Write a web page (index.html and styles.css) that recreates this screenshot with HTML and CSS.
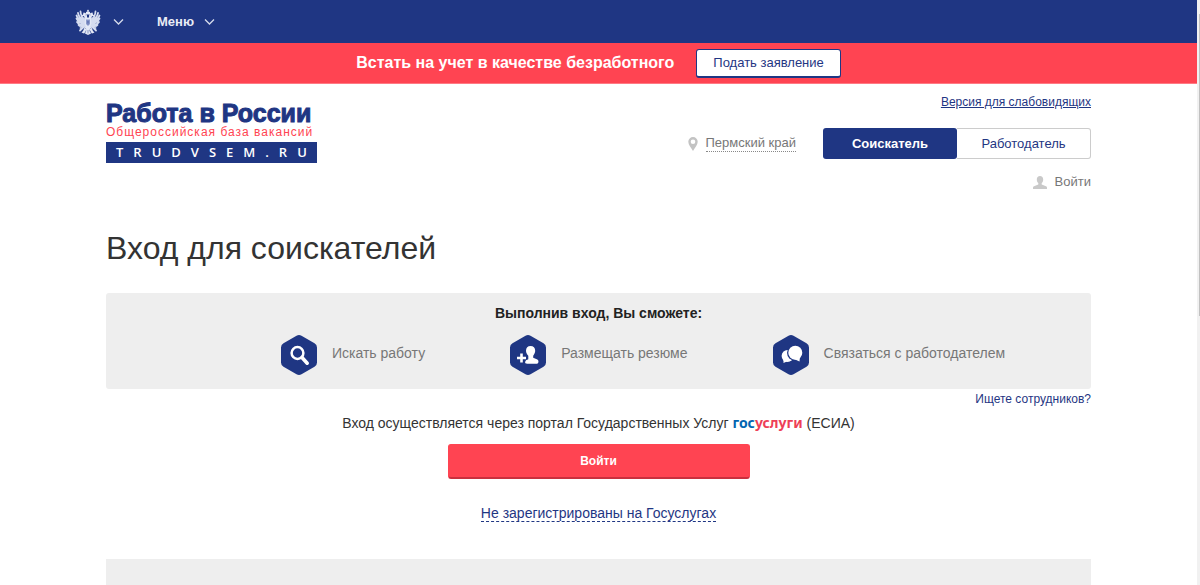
FILE: index.html
```html
<!DOCTYPE html>
<html lang="ru">
<head>
<meta charset="utf-8">
<meta name="viewport" content="width=device-width, initial-scale=1">
<title>Работа в России</title>
<link rel="stylesheet" href="styles.css">
</head>
<body>
<div class="page">
  <nav class="topbar">
    <button class="top-item" type="button" aria-label="Государственные сайты">
      <svg class="eagle" viewBox="0 0 52 52" aria-hidden="true">
        <g fill="#e3e8f6">
          <path d="M26 1l2 2-1 2 3 1v5h-8V6l3-1-1-2z"/>
          <path d="M17 7l4 1 3 4v6h-5l-1-4-4 1-1-2 3-2zM35 7l-4 1-3 4v6h5l1-4 4 1 1-2-3-2z"/>
          <path d="M20 17h12l3 9-3 12-6 5-6-5-3-12z"/>
          <path d="M19 37l4 4-1 5-4 3-5-2 3-3zM33 37l-4 4 1 5 4 3 5-2-3-3zM23 40h6l3 9-6 3-6-3z"/>
        </g>
        <g stroke="#d5dcf0" stroke-width="3.600" stroke-linecap="round" fill="none">
          <path d="M19 20Q12 17 11 5M18 22Q8 19 6 8M18 25Q6 22 3 13M18 28Q7 27 3 19M18 31Q8 32 4 26M19 33Q10 36 7 32M20 35Q14 39 11 38"/>
          <path d="M33 20Q40 17 41 5M34 22Q44 19 46 8M34 25Q46 22 49 13M34 28Q45 27 49 19M34 31Q44 32 48 26M33 33Q42 36 45 32M32 35Q38 39 41 38"/>
          <path d="M15 38L10 43M37 38L42 43"/>
        </g>
        <path d="M22 21h8v9l-4 4-4-4z" fill="#8c9bcb"/>
        <path d="M26 23v8M24 26h4M22 43l-2 5M30 43l2 5M26 42v7M21 12h2M29 12h2" stroke="#4a5fa6" stroke-width="1.2"/>
      </svg>
      <svg class="chevron" viewBox="0 0 10 6" aria-hidden="true"><path d="M.5.5L5 5 9.500.5"/></svg>
    </button>
    <button class="top-item menu" type="button">Меню
      <svg class="chevron" viewBox="0 0 10 6" aria-hidden="true"><path d="M.5.5L5 5 9.500.5"/></svg>
    </button>
  </nav>

  <div class="notice">
    <strong>Встать на учет в качестве безработного</strong>
    <button class="apply" type="button">Подать заявление</button>
  </div>

  <div class="container">
    <header class="header">
      <a class="logo" href="#">
        <span class="logo-name">Работа в России</span>
        <span class="logo-sub">Общероссийская база вакансий</span>
        <span class="logo-site">TRUDVSEM.RU</span>
      </a>
      <div class="tools">
        <a class="vision" href="#">Версия для слабовидящих</a>
        <div class="tools-row">
          <a class="region" href="#">
            <svg class="pin" viewBox="0 0 10 14" aria-hidden="true"><path fill-rule="evenodd" d="M5 0a4.700 4.700 0 0 1 4.700 4.700C9.700 7.500 7 10.500 5 14 3 10.500.3 7.500.3 4.700A4.700 4.700 0 0 1 5 0zm0 2.500a2.300 2.300 0 1 0 0 4.600 2.300 2.300 0 0 0 0-4.600z"/></svg>
            <span>Пермский край</span>
          </a>
          <div class="switch">
            <button class="role active" type="button">Соискатель</button>
            <button class="role" type="button">Работодатель</button>
          </div>
        </div>
        <a class="signin" href="#">
          <svg class="person" viewBox="0 0 14 13" aria-hidden="true"><path d="M7 0c2 0 3.200 1.300 3.200 3.400 0 1.700-.7 2.800-1.500 3.700v1.400l4.300 1.700c.7.300 1 .8 1 1.600V13H0v-1.200c0-.8.3-1.300 1-1.600l4.300-1.700V7.100C4.500 6.200 3.800 5.100 3.800 3.400 3.800 1.300 5 0 7 0z"/></svg>
          Войти
        </a>
      </div>
    </header>

    <main class="main">
      <h1>Вход для соискателей</h1>
      <section class="benefits">
        <h2>Выполнив вход, Вы сможете:</h2>
        <ul>
          <li>
            <svg class="hex" viewBox="0 0 38 42" aria-hidden="true">
              <path class="hex-bg" d="M16.500 1.700q2.500-1.400 5 0l13 7.500q2.500 1.400 2.500 4.300v15q0 2.900-2.500 4.300l-13 7.500q-2.500 1.400-5 0l-13-7.500Q1 31.400 1 28.500v-15q0-2.900 2.500-4.300z"/>
              <circle cx="17.500" cy="19" r="5.900" fill="none" stroke="#fff" stroke-width="2.500"/>
              <path d="M22 23.500l5.200 5.700" stroke="#fff" stroke-width="3.600" stroke-linecap="round"/>
            </svg>
            <span>Искать работу</span>
          </li>
          <li>
            <svg class="hex" viewBox="0 0 38 42" aria-hidden="true">
              <path class="hex-bg" d="M16.500 1.700q2.500-1.400 5 0l13 7.500q2.500 1.400 2.500 4.300v15q0 2.900-2.500 4.300l-13 7.500q-2.500 1.400-5 0l-13-7.500Q1 31.400 1 28.500v-15q0-2.900 2.500-4.300z"/>
              <path d="M8 24h9M12.500 19.500v9" stroke="#fff" stroke-width="2.600"/>
              <path fill="#fff" d="M21.500 12c3 0 4.700 1.800 4.700 4.700 0 2.300-1.200 3.500-2 5v2l3.600 1.500c1.400.6 2 1.600 1.500 3.300-.2.900-1 1.200-2 1.200h-9c-1.800 0-2.600-.6-2-2.200.4-1.200 1.500-1.700 3-2.200v-3.600c-1.200-1.300-2.300-2.800-2.300-5 0-2.900 1.700-4.700 4.500-4.700z"/>
            </svg>
            <span>Размещать резюме</span>
          </li>
          <li>
            <svg class="hex" viewBox="0 0 38 42" aria-hidden="true">
              <path class="hex-bg" d="M16.500 1.700q2.500-1.400 5 0l13 7.500q2.500 1.400 2.500 4.300v15q0 2.900-2.500 4.300l-13 7.500q-2.500 1.400-5 0l-13-7.500Q1 31.400 1 28.500v-15q0-2.900 2.500-4.300z"/>
              <circle cx="15.500" cy="22" r="5.900" fill="#fff"/>
              <path fill="#fff" d="M11.500 25v4l5-2.200z"/>
              <circle cx="23.300" cy="18.700" r="8.300" class="hex-bg"/>
              <circle cx="23.300" cy="18.700" r="7" fill="#fff"/>
              <path fill="#fff" d="M22 25l5.500 2.500.5-5z"/>
            </svg>
            <span>Связаться с работодателем</span>
          </li>
        </ul>
      </section>
      <a class="employers" href="#">Ищете сотрудников?</a>
      <section class="login">
        <p>Вход осуществляется через портал Государственных Услуг <span class="gos"><span class="gos-blue">гос</span>услуги</span> (ЕСИА)</p>
        <button class="login-button" type="button">Войти</button>
        <a class="register" href="#">Не зарегистрированы на Госуслугах</a>
      </section>
      <section class="next-panel"></section>
    </main>
  </div>
</div>
<div class="scroll-track" aria-hidden="true"><div class="scroll-thumb"></div></div>
</body>
</html>
```
FILE: styles.css
```css
* { box-sizing: border-box; }

body {
  margin: 0;
  min-height: 100vh;
  display: grid;
  grid-template-columns: minmax(0, 1fr) 3px;
  background: #fff;
  color: #333;
  font: 14px/20px "Liberation Sans", Arial, sans-serif;
}

button { font: inherit; cursor: pointer; }
a { color: #1f3683; text-decoration: none; }
svg { flex: none; }

.page { display: flex; flex-direction: column; }

.topbar {
  display: flex;
  gap: 33px;
  height: 43px;
  padding-left: 75px;
  background: #1f3683;
}
.top-item {
  display: flex;
  align-items: center;
  gap: 12px;
  padding: 0;
  border: 0;
  background: none;
  color: #e9ecf5;
}
.menu { gap: 10px; font-size: 13px; font-weight: bold; }
.eagle { width: 26px; height: 26px; }
.chevron { width: 11px; height: 6px; fill: none; stroke: #d5dbec; stroke-width: 1.300; overflow: visible; }

.notice {
  display: flex;
  align-items: center;
  justify-content: center;
  gap: 22px;
  height: 41px;
  background: #ff4452;
  border-bottom: 1px solid #ff7a84;
  color: #fff;
  font-size: 16px;
}
.apply {
  height: 29px;
  padding: 0 16px;
  border: 1px solid #1f3683;
  border-bottom-width: 2px;
  border-radius: 3px;
  background: #fff;
  color: #1f3683;
  font-size: 13px;
}

.container {
  flex: 1;
  display: flex;
  flex-direction: column;
  width: 100%;
  max-width: 1017px;
  margin: 0 auto;
  padding: 0 16px;
}

.header { display: flex; justify-content: space-between; padding-top: 8px; }
.logo { display: flex; flex-direction: column; padding-top: 9px; }
.logo-name {
  font-size: 25px;
  line-height: 24px;
  font-weight: bold;
  -webkit-text-stroke: 1px #1f3683;
}
.logo-sub { color: #ff4452; font-size: 12px; line-height: 14px; letter-spacing: 1px; }
.logo-site {
  margin-top: 3px;
  padding-left: 10px;
  background: #1f3683;
  color: #fff;
  font: 600 13px/21px "Open Sans", sans-serif;
  letter-spacing: 10px;
}

.tools { display: flex; flex-direction: column; align-items: flex-end; font-size: 13px; }
.vision { font-size: 12px; text-decoration: underline; }
.tools-row { display: flex; align-items: center; gap: 27px; margin-top: 16px; }
.region, .signin { display: flex; align-items: center; color: #777; }
.region { gap: 8px; }
.region span { border-bottom: 1px dotted #888; line-height: 16px; }
.pin { width: 10px; height: 14px; fill: #c3c3c3; }
.switch { display: flex; }
.role {
  width: 134px;
  height: 31px;
  border: 1px solid #ccc;
  border-left: 0;
  border-radius: 0 3px 3px 0;
  background: #fff;
  color: #1f3683;
}
.role.active {
  border: 0;
  border-radius: 3px;
  background: #1f3683;
  color: #fff;
  font-weight: bold;
}
.signin { gap: 8px; margin-top: 13px; }
.person { width: 14px; height: 13px; fill: #c9c9c9; }

.main { flex: 1; display: flex; flex-direction: column; }
h1 { margin: 36px 0 25px; font-size: 32px; line-height: 40px; font-weight: normal; }

.benefits { padding: 10px 0 13px; border-radius: 3px; background: #eee; }
h2 { margin: 0; font-size: 14px; line-height: 20px; text-align: center; color: #222; }
.benefits ul {
  display: flex;
  justify-content: center;
  gap: 84px;
  margin: 0;
  padding: 11px 0 0 88px;
  list-style: none;
}
.benefits li { display: flex; align-items: center; gap: 14px; color: #777; }
.benefits li span { padding-bottom: 4px; }
.hex { width: 38px; height: 42px; }
.hex-bg { fill: #1f3683; }

.employers { align-self: flex-end; font-size: 12px; }
.login { display: flex; flex-direction: column; align-items: center; }
.login p { margin: 4px 0 11px; }
.gos { color: #ee3f58; font: bold 14px/20px "Noto Sans", sans-serif; }
.gos-blue { color: #0065b1; }
.login-button {
  width: 302px;
  height: 35px;
  border: 1px solid #ff4452;
  border-bottom: 2px solid #c9303e;
  border-radius: 3px;
  background: #ff4452;
  color: #fff;
  font-size: 12px;
  font-weight: bold;
}
.register { margin-top: 26px; border-bottom: 1px dashed #1f3683; line-height: 16px; }
.next-panel { flex: 1; min-height: 26px; margin-top: 37px; background: #eee; }

.scroll-track { padding: 14px 0 0 2px; background: #f1f1f1; }
.scroll-thumb { height: 302px; background: #c1c1c1; }
```
